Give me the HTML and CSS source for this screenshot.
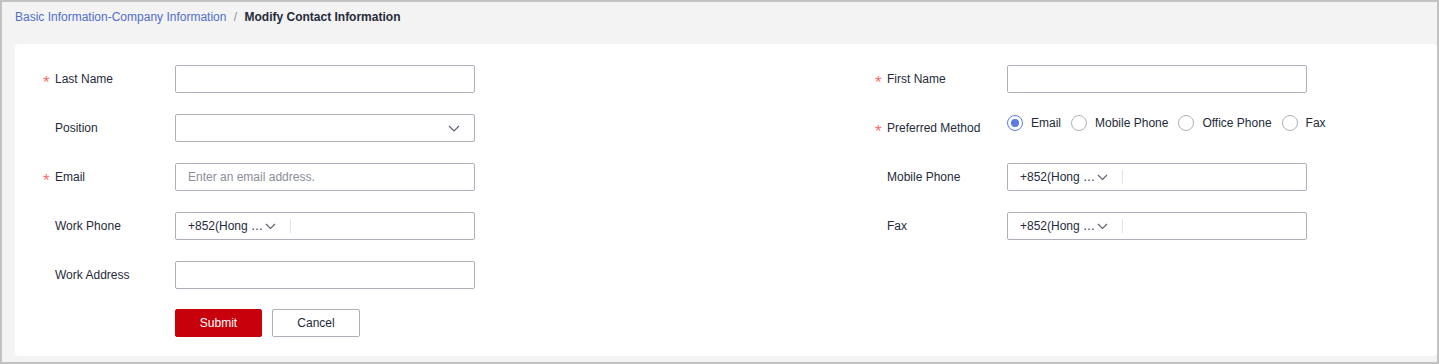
FILE: index.html
```html
<!DOCTYPE html>
<html lang="en">
<head>
    <meta charset="UTF-8">
    <title>Modify Contact Information</title>
    <link rel="stylesheet" href="styles.css">
</head>
<body>
    <div class="breadcrumb">
        <a href="#">Basic Information-Company Information</a>
        <span class="sep">/</span>
        <span class="current">Modify Contact Information</span>
    </div>

    <div class="card">
        <form class="form">
            <div class="row">
                <label class="label"><span class="req">*</span>Last Name</label>
                <input class="input" type="text">
            </div>
            <div class="row">
                <label class="label"><span class="req">*</span>First Name</label>
                <input class="input" type="text">
            </div>

            <div class="row">
                <label class="label"><span class="req"></span>Position</label>
                <div class="input select">
                    <span></span>
                    <svg class="chev" width="12" height="7" viewBox="0 0 12 7"><path d="M1 1l5 5 5-5" fill="none" stroke="#5c6173" stroke-width="1.2"/></svg>
                </div>
            </div>
            <div class="row">
                <label class="label"><span class="req">*</span>Preferred Method</label>
                <div class="radios">
                    <label class="radio checked"><span class="dot"></span>Email</label>
                    <label class="radio"><span class="dot"></span>Mobile Phone</label>
                    <label class="radio"><span class="dot"></span>Office Phone</label>
                    <label class="radio"><span class="dot"></span>Fax</label>
                </div>
            </div>

            <div class="row">
                <label class="label"><span class="req">*</span>Email</label>
                <input class="input" type="text" placeholder="Enter an email address.">
            </div>
            <div class="row">
                <label class="label"><span class="req"></span>Mobile Phone</label>
                <div class="input phone">
                    <span class="code">+852(Hong …</span>
                    <svg class="chev-sm" width="11" height="7" viewBox="0 0 11 7"><path d="M1 1l4.5 4.5L10 1" fill="none" stroke="#5c6173" stroke-width="1.2"/></svg>
                    <span class="bar"></span>
                </div>
            </div>

            <div class="row">
                <label class="label"><span class="req"></span>Work Phone</label>
                <div class="input phone">
                    <span class="code">+852(Hong …</span>
                    <svg class="chev-sm" width="11" height="7" viewBox="0 0 11 7"><path d="M1 1l4.5 4.5L10 1" fill="none" stroke="#5c6173" stroke-width="1.2"/></svg>
                    <span class="bar"></span>
                </div>
            </div>
            <div class="row">
                <label class="label"><span class="req"></span>Fax</label>
                <div class="input phone">
                    <span class="code">+852(Hong …</span>
                    <svg class="chev-sm" width="11" height="7" viewBox="0 0 11 7"><path d="M1 1l4.5 4.5L10 1" fill="none" stroke="#5c6173" stroke-width="1.2"/></svg>
                    <span class="bar"></span>
                </div>
            </div>

            <div class="row">
                <label class="label"><span class="req"></span>Work Address</label>
                <input class="input" type="text">
            </div>
            <div></div>

            <div class="row actions">
                <button type="button" class="btn primary">Submit</button>
                <button type="button" class="btn">Cancel</button>
            </div>
        </form>
    </div>
</body>
</html>
```

FILE: styles.css
```css
* {
    box-sizing: border-box;
}
html, body {
    margin: 0;
}
body {
    width: 1439px;
    height: 364px;
    border: 2px solid #c2c2c2;
    background: #f3f3f3;
    font-family: "Liberation Sans", Arial, sans-serif;
    font-size: 12px;
    color: #252b3a;
    overflow: hidden;
}
.breadcrumb {
    padding: 6px 0 0 13px;
    line-height: 18px;
    height: 42px;
}
.breadcrumb a {
    color: #526ecc;
    text-decoration: none;
}
.breadcrumb .sep {
    color: #8a8e99;
    margin: 0 4px;
}
.breadcrumb .current {
    font-weight: bold;
}
.card {
    background: #fff;
    margin: 0 0 0 13px;
    border-radius: 4px;
    height: 312px;
    padding: 21px 0 0 28px;
}
.form {
    display: grid;
    grid-template-columns: 832px auto;
    row-gap: 21px;
}
.row {
    display: flex;
    align-items: center;
    height: 28px;
}
.label {
    width: 132px;
    display: flex;
    align-items: center;
}
.req {
    width: 12px;
    height: 12px;
    color: #f66f6a;
    font-size: 17px;
    line-height: 12px;
    padding-top: 4px;
    overflow: visible;
}
.input {
    width: 300px;
    height: 28px;
    border: 1px solid #adb0b8;
    border-radius: 2px;
    padding: 0 12px;
    font-family: inherit;
    font-size: 12px;
    color: #252b3a;
    outline: none;
}
.input::placeholder {
    color: #8a8e99;
}
.select {
    display: flex;
    align-items: center;
    justify-content: space-between;
    padding-right: 14px;
}
.phone {
    display: flex;
    align-items: center;
}
.chev-sm {
    margin-left: 2px;
}
.bar {
    width: 1px;
    height: 14px;
    background: #dfe1e6;
    margin-left: 14px;
}
.radios {
    display: flex;
    align-self: flex-start;
    height: 18px;
    align-items: center;
}
.radio {
    display: flex;
    align-items: center;
    margin-right: 10px;
}
.dot {
    width: 16px;
    height: 16px;
    border: 1px solid #adb0b8;
    border-radius: 50%;
    margin-right: 8px;
    position: relative;
}
.checked .dot {
    border-color: #5e7ce0;
}
.checked .dot::after {
    content: "";
    position: absolute;
    left: 3px;
    top: 3px;
    width: 8px;
    height: 8px;
    border-radius: 50%;
    background: #5e7ce0;
}
.actions {
    padding-left: 132px;
    margin-top: -1px;
}
.btn {
    height: 28px;
    width: 88px;
    border: 1px solid #adb0b8;
    border-radius: 2px;
    background: #fff;
    color: #252b3a;
    font-family: inherit;
    font-size: 12px;
    margin-right: 10px;
    padding: 0;
}
.btn.primary {
    background: #c7000b;
    border-color: #c7000b;
    color: #fff;
    width: 87px;
}
```
